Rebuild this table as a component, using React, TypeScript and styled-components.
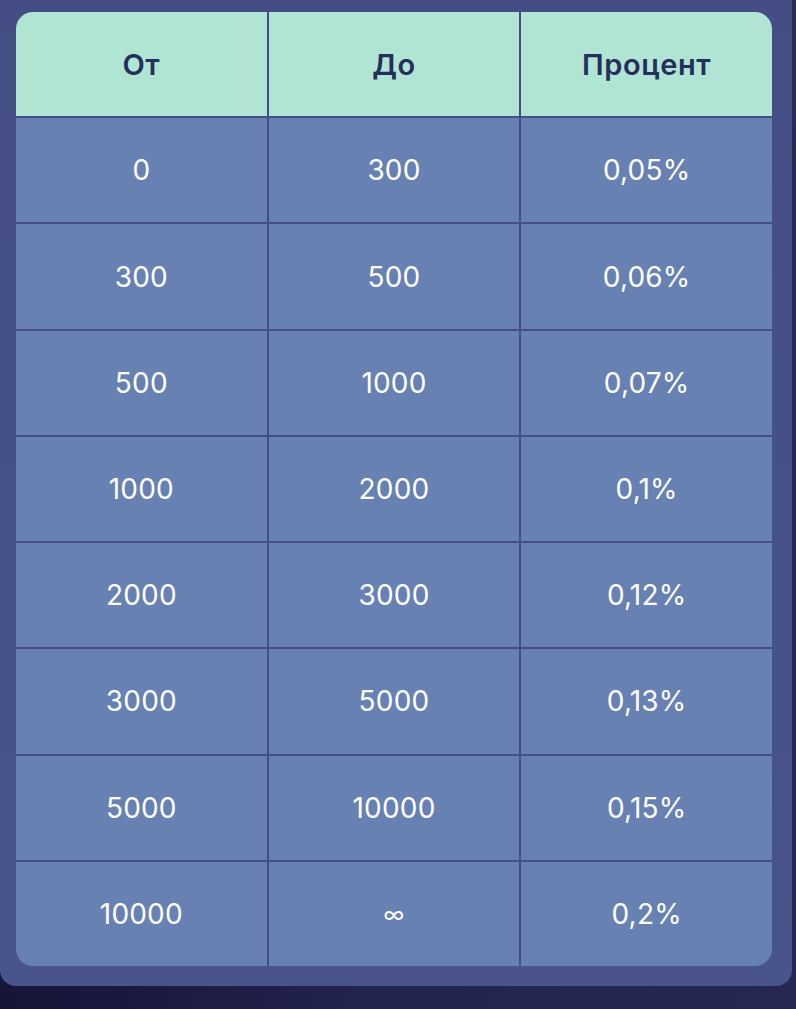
import React from "react";
import styled, { createGlobalStyle } from "styled-components";

const Global = createGlobalStyle`
  html, body {
    margin: 0;
    padding: 0;
    background: radial-gradient(circle at 0% 100%, #151438 0%, #232450 30%, #2a2c54 100%);
    min-height: 100%;
  }
  body {
    width: 796px;
    height: 1009px;
    overflow: hidden;
    font-family: Inter, "Noto Sans", sans-serif;
  }
`;

const Panel = styled.div`
  width: 792px;
  box-sizing: border-box;
  padding: 12px 20px 20px 16px;
  background: linear-gradient(180deg, #444e84 0%, #48548a 100%);
  border-radius: 0 0 16px 16px;
`;

const Table = styled.div`
  display: grid;
  grid-template-columns: repeat(3, 1fr);
  grid-template-rows: repeat(9, 1fr);
  gap: 2px;
  background: #454f85;
  border-radius: 17px;
  overflow: hidden;
  height: 954px;
`;

const Cell = styled.div<{ $head?: boolean }>`
  display: flex;
  align-items: center;
  justify-content: center;
  background: ${(p) => (p.$head ? "#b0e5d3" : "#6781b3")};
  color: ${(p) => (p.$head ? "#252e5c" : "#ffffff")};
  font-size: ${(p) => (p.$head ? "29px" : "28px")};
  font-weight: ${(p) => (p.$head ? 600 : 400)};
  letter-spacing: ${(p) => (p.$head ? "0.6px" : "0.2px")};
`;

const Infinity = styled.span`
  font-size: 22px;
  line-height: 1;
`;

const rows: [string, string, string][] = [
  ["0", "300", "0,05%"],
  ["300", "500", "0,06%"],
  ["500", "1000", "0,07%"],
  ["1000", "2000", "0,1%"],
  ["2000", "3000", "0,12%"],
  ["3000", "5000", "0,13%"],
  ["5000", "10000", "0,15%"],
  ["10000", "∞", "0,2%"],
];

export default function App() {
  return (
    <>
      <Global />
      <Panel>
        <Table>
          <Cell $head>От</Cell>
          <Cell $head>До</Cell>
          <Cell $head>Процент</Cell>
          {rows.map((r, i) => (
            <React.Fragment key={i}>
              {r.map((c, j) => (
                <Cell key={j}>{c === "∞" ? <Infinity>∞</Infinity> : c}</Cell>
              ))}
            </React.Fragment>
          ))}
        </Table>
      </Panel>
    </>
  );
}
